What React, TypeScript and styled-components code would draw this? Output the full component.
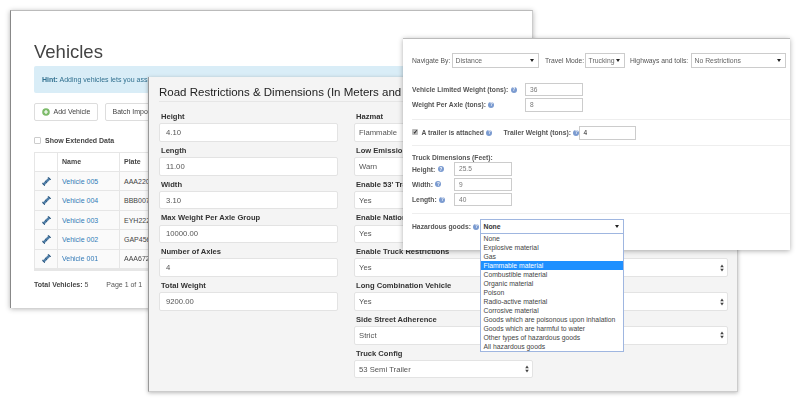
import React from "react";
import styled, { createGlobalStyle } from "styled-components";

const Global = createGlobalStyle`
  html, body { margin: 0; padding: 0; background: #fff; }
  body { font-family: "Liberation Sans", Arial, sans-serif; width: 800px; height: 406px; overflow: hidden; }
  #root { width: 800px; height: 406px; }
`;

const Canvas = styled.div`
  position: relative;
  width: 800px;
  height: 406px;
  overflow: hidden;
  filter: blur(0.4px);
`;

const VehiclesWindow = styled.section`
  position: absolute;
  left: 10px;
  top: 10px;
  width: 523px;
  height: 298px;
  box-sizing: border-box;
  padding: 30px 23px 0;
  background: #fff;
  border-top: 1px solid #bbb;
  border-left: 1px solid #888;
  border-right: 1px solid #ccc;
  box-shadow: 0 1px 5px rgba(0, 0, 0, 0.3);
  color: #333;
`;
const PageTitle = styled.h1`
  margin: 0 0 4px;
  font-size: 18.5px;
  line-height: 21px;
  font-weight: 500;
  color: #444;
`;
const Hint = styled.div`
  height: 27px;
  box-sizing: border-box;
  padding: 0 8px;
  background: #d9edf7;
  border-radius: 2px;
  color: #31708f;
  font-size: 7px;
  line-height: 27px;
  white-space: nowrap;
  overflow: hidden;
  b { font-weight: 700; }
`;
const Toolbar = styled.div`
  display: flex;
  gap: 7px;
  margin-top: 10px;
`;
const ToolButton = styled.div`
  display: flex;
  align-items: center;
  gap: 4px;
  height: 17.5px;
  box-sizing: border-box;
  padding: 0 6.5px;
  border: 1px solid #ddd;
  border-radius: 2px;
  font-size: 7px;
  color: #444;
  background: #fff;
`;
const CheckRow = styled.label`
  display: flex;
  align-items: center;
  gap: 4px;
  margin-top: 15px;
  font-size: 7px;
  font-weight: 700;
  color: #444;
  height: 9px;
`;
const EmptyBox = styled.span`
  width: 5px;
  height: 5px;
  border: 1px solid #ccc;
  border-radius: 1px;
  background: #fff;
`;
const Table = styled.div`
  display: grid;
  grid-template-columns: 23px 62px 120px 1fr;
  margin-top: 7px;
  border: 1px solid #e6e6e6;
  border-bottom-width: 2px;
  font-size: 7px;
  width: 440px;
`;
const Cell = styled.div<{ $head?: boolean; $center?: boolean }>`
  height: 19.45px;
  box-sizing: border-box;
  display: flex;
  align-items: center;
  justify-content: ${(p) => (p.$center ? "center" : "flex-start")};
  padding: ${(p) => (p.$center ? "0" : "0 4px")};
  border-right: 1px solid #e6e6e6;
  border-bottom: 1px solid #e6e6e6;
  background: ${(p) => (p.$head ? "#fff" : "#fafafa")};
  font-weight: ${(p) => (p.$head ? 700 : 400)};
  color: #444;
`;
const VehicleLink = styled.a`
  color: #337ab7;
`;
const Footer = styled.div`
  display: flex;
  gap: 18px;
  margin-top: 10px;
  font-size: 7px;
  color: #555;
  b { color: #444; }
`;

const RoadWindow = styled.section`
  position: absolute;
  left: 148px;
  top: 77px;
  width: 590px;
  height: 315px;
  box-sizing: border-box;
  padding: 8px 10px 0 10px;
  background: #f4f4f4;
  border-left: 1px solid #999;
  border-bottom: 1px solid #ccc;
  border-right: 1px solid #ccc;
  box-shadow: 0 1px 4px rgba(0, 0, 0, 0.28);
`;
const RoadTitle = styled.h2`
  margin: 0 0 6px;
  padding-bottom: 1px;
  border-bottom: 1px solid #e6e6e6;
  font-size: 11.5px;
  line-height: 15px;
  font-weight: 400;
  color: #222;
  white-space: nowrap;
  overflow: hidden;
`;
const RoadColumns = styled.div`
  display: grid;
  grid-template-columns: 179px 374px;
  gap: 16px;
  align-items: start;
  margin-top: 2px;
`;
const FieldColumn = styled.div`
  display: flex;
  flex-direction: column;
  gap: 0;
`;
const RoadLabel = styled.div`
  margin: 0 0 1px 2px;
  height: 14.3px;
  line-height: 17px;
  font-size: 7.6px;
  font-weight: 700;
  color: #333;
  white-space: nowrap;
`;
const RoadControl = styled.div<{ $narrow?: boolean; $indent?: boolean }>`
  display: flex;
  align-items: center;
  justify-content: space-between;
  height: 18.5px;
  box-sizing: border-box;
  width: ${(p) => (p.$narrow ? "179px" : "100%")};
  padding: 0 3px 0 ${(p) => (p.$indent ? "6px" : "4px")};
  background: #fff;
  border: 1px solid #e3e3e3;
  border-radius: 2px;
  font-size: 7.7px;
  color: #555;
`;
const Spinner = () => (
  <svg width="4" height="8" viewBox="0 0 4 8" aria-hidden="true">
    <path d="M2 0.5 L3.8 3.2 H0.2 Z M2 7.5 L0.2 4.8 H3.8 Z" fill="#444" />
  </svg>
);

const NavWindow = styled.section`
  position: absolute;
  left: 403px;
  top: 38px;
  width: 387px;
  height: 212px;
  box-sizing: border-box;
  padding: 14px 0 0 9px;
  background: #fff;
  border-top: 1px solid #bbb;
  box-shadow: 0 1px 5px rgba(0, 0, 0, 0.32);
  font-size: 6.75px;
  color: #444;
`;
const NavRow = styled.div`
  display: flex;
  align-items: center;
  height: 15px;
  color: #555;
  white-space: nowrap;
`;
const TightLabel = styled.span<{ $w?: number; $gap?: number }>`
  width: ${(p) => (p.$w ? `${p.$w}px` : "auto")};
  margin-left: ${(p) => p.$gap ?? 0}px;
  flex: none;
  display: flex;
  align-items: center;
`;
const NavSelect = styled.div<{ $w: number; $open?: boolean }>`
  width: ${(p) => p.$w}px;
  flex: none;
  height: ${(p) => (p.$open ? "14.5px" : "15px")};
  box-sizing: border-box;
  display: flex;
  align-items: center;
  justify-content: space-between;
  padding: 0 4px 0 2.5px;
  background: #fff;
  border: 1px solid ${(p) => (p.$open ? "#9fb6e0" : "#ccc")};
  font-size: 6.85px;
  font-weight: ${(p) => (p.$open ? 700 : 400)};
  color: ${(p) => (p.$open ? "#333" : "#666")};
`;
const Arrow = styled.span`
  width: 0;
  height: 0;
  border-left: 2px solid transparent;
  border-right: 2px solid transparent;
  border-top: 3px solid #222;
`;
const Section = styled.div<{ $top: number; $bottom: number; $line?: boolean }>`
  padding: ${(p) => p.$top}px 0 ${(p) => p.$bottom}px;
  border-bottom: ${(p) => (p.$line ? "1px solid #eee" : "none")};
`;
const BoldRow = styled.div`
  display: flex;
  align-items: center;
  height: 15.2px;
  font-weight: 700;
  white-space: nowrap;
  color: #555;
`;
const BoxInput = styled.div<{ $w: number; $dark?: boolean }>`
  width: ${(p) => p.$w}px;
  height: 13.6px;
  flex: none;
  box-sizing: border-box;
  padding: 0 4px;
  line-height: 11px;
  border: 1px solid #ccc;
  background: #fff;
  font-weight: 400;
  font-size: 6.6px;
  color: ${(p) => (p.$dark ? "#222" : "#777")};
`;
const Help = styled.span`
  display: inline-flex;
  align-items: center;
  justify-content: center;
  flex: none;
  width: 6px;
  height: 6px;
  margin-left: 2.5px;
  border-radius: 50%;
  background: #7b9bd0;
  color: #fff;
  font-size: 4.5px;
  font-weight: 700;
`;
const DimTitle = styled.div`
  height: 9px;
  line-height: 9px;
  font-size: 6.75px;
  font-weight: 700;
  color: #555;
`;
const Tick = styled.span`
  width: 6px;
  height: 6px;
  margin: -2px 3.5px 0 0;
  flex: none;
  background: #bbb;
  border-radius: 1px;
  color: #222;
  font-size: 6px;
  line-height: 6px;
  text-align: center;
  font-weight: 700;
`;
const HazardWrap = styled.div`
  position: relative;
  flex: none;
`;
const Menu = styled.ul`
  position: absolute;
  left: 0;
  top: 14px;
  width: 144px;
  box-sizing: border-box;
  margin: 0;
  padding: 0;
  list-style: none;
  background: #fff;
  border: 1px solid #9fb6e0;
  font-size: 6.8px;
  font-weight: 400;
  z-index: 2;
`;
const MenuItem = styled.li<{ $active?: boolean }>`
  height: 8.95px;
  line-height: 9px;
  padding-left: 2.5px;
  white-space: nowrap;
  background: ${(p) => (p.$active ? "#1e90ff" : "#fff")};
  color: ${(p) => (p.$active ? "#fff" : "#444")};
`;

const Tool = () => (
  <svg width="9" height="9" viewBox="0 0 9 9" aria-hidden="true">
    <path d="M1.2 7.8 L7.8 1.2" stroke="#4f7ea8" strokeWidth="2.6" />
    <path d="M0.2 6 L3 8.8 M3.2 4 L5 5.8 M6 0.2 L8.8 3" stroke="#2f5578" strokeWidth="1" />
  </svg>
);
const AddIcon = () => (
  <svg width="8" height="8" viewBox="0 0 8 8" aria-hidden="true">
    <circle cx="4" cy="4" r="3.8" fill="#7dbb6a" />
    <path d="M4 2 V6 M2 4 H6" stroke="#fff" strokeWidth="1.2" />
  </svg>
);

const vehicles = [
  ["Vehicle 005", "AAA2201"],
  ["Vehicle 004", "BBB0072"],
  ["Vehicle 003", "EYH2223"],
  ["Vehicle 002", "GAP4561"],
  ["Vehicle 001", "AAA6725"],
];
const leftFields = [
  ["Height", "4.10"],
  ["Length", "11.00"],
  ["Width", "3.10"],
  ["Max Weight Per Axle Group", "10000.00"],
  ["Number of Axles", "4"],
  ["Total Weight", "9200.00"],
];
const rightFields = [
  ["Hazmat", "Flammable"],
  ["Low Emission Zone", "Warn"],
  ["Enable 53' Trailer", "Yes"],
  ["Enable National Network", "Yes"],
  ["Enable Truck Restrictions", "Yes"],
  ["Long Combination Vehicle", "Yes"],
  ["Side Street Adherence", "Strict"],
];
const goods = [
  "None",
  "Explosive material",
  "Gas",
  "Flammable material",
  "Combustible material",
  "Organic material",
  "Poison",
  "Radio-active material",
  "Corrosive material",
  "Goods which are poisonous upon inhalation",
  "Goods which are harmful to water",
  "Other types of hazardous goods",
  "All hazardous goods",
];

export default function App() {
  return (
    <Canvas>
      <Global />
      <VehiclesWindow>
        <PageTitle>Vehicles</PageTitle>
        <Hint>
          <b>Hint:</b> Adding vehicles lets you assign specific routes to each vehicle for tracking and reporting your fleet data
        </Hint>
        <Toolbar>
          <ToolButton>
            <AddIcon />
            Add Vehicle
          </ToolButton>
          <ToolButton>Batch Import</ToolButton>
        </Toolbar>
        <CheckRow>
          <EmptyBox />
          Show Extended Data
        </CheckRow>
        <Table>
          <Cell $head />
          <Cell $head>Name</Cell>
          <Cell $head>Plate</Cell>
          <Cell $head />
          {vehicles.map(([name, plate]) => (
            <React.Fragment key={name}>
              <Cell $center>
                <Tool />
              </Cell>
              <Cell>
                <VehicleLink>{name}</VehicleLink>
              </Cell>
              <Cell>{plate}</Cell>
              <Cell />
            </React.Fragment>
          ))}
        </Table>
        <Footer>
          <span>
            <b>Total Vehicles:</b> 5
          </span>
          <span>Page 1 of 1</span>
        </Footer>
      </VehiclesWindow>

      <RoadWindow>
        <RoadTitle>Road Restrictions &amp; Dimensions (In Meters and Tons)</RoadTitle>
        <RoadColumns>
          <FieldColumn>
            {leftFields.map(([label, value]) => (
              <div key={label}>
                <RoadLabel>{label}</RoadLabel>
                <RoadControl $indent>{value}</RoadControl>
              </div>
            ))}
          </FieldColumn>
          <FieldColumn>
            {rightFields.map(([label, value]) => (
              <div key={label}>
                <RoadLabel>{label}</RoadLabel>
                <RoadControl>
                  {value}
                  <Spinner />
                </RoadControl>
              </div>
            ))}
            <div>
              <RoadLabel>Truck Config</RoadLabel>
              <RoadControl $narrow>
                53 Semi Trailer
                <Spinner />
              </RoadControl>
            </div>
          </FieldColumn>
        </RoadColumns>
      </RoadWindow>

      <NavWindow>
        <Section $top={0} $bottom={14}>
          <NavRow>
            <TightLabel $w={40}>Navigate By:</TightLabel>
            <NavSelect $w={87}>
              Distance
              <Arrow />
            </NavSelect>
            <TightLabel $w={40} $gap={6}>Travel Mode:</TightLabel>
            <NavSelect $w={40}>
              Trucking
              <Arrow />
            </NavSelect>
            <TightLabel $w={61} $gap={5}>Highways and tolls:</TightLabel>
            <NavSelect $w={95}>
              No Restrictions
              <Arrow />
            </NavSelect>
          </NavRow>
        </Section>
        <Section $top={0} $bottom={7} $line>
          <BoldRow>
            <TightLabel $w={113}>
              Vehicle Limited Weight (tons):<Help>?</Help>
            </TightLabel>
            <BoxInput $w={58}>36</BoxInput>
          </BoldRow>
          <BoldRow>
            <TightLabel $w={113}>
              Weight Per Axle (tons):<Help>?</Help>
            </TightLabel>
            <BoxInput $w={58}>8</BoxInput>
          </BoldRow>
        </Section>
        <Section $top={5} $bottom={4} $line>
          <BoldRow>
            <Tick>✓</Tick>
            <TightLabel $w={82}>
              A trailer is attached<Help>?</Help>
            </TightLabel>
            <TightLabel $w={75}>
              Trailer Weight (tons):<Help>?</Help>
            </TightLabel>
            <BoxInput $w={57} $dark>4</BoxInput>
          </BoldRow>
        </Section>
        <Section $top={7} $bottom={6} $line>
          <DimTitle>Truck Dimensions (Feet):</DimTitle>
          {[
            ["Height:", "25.5"],
            ["Width:", "9"],
            ["Length:", "40"],
          ].map(([label, value]) => (
            <BoldRow key={label}>
              <TightLabel $w={42}>
                {label}
                <Help>?</Help>
              </TightLabel>
              <BoxInput $w={58}>{value}</BoxInput>
            </BoldRow>
          ))}
        </Section>
        <Section $top={5} $bottom={0}>
          <BoldRow>
            <TightLabel $w={68}>
              Hazardous goods:<Help>?</Help>
            </TightLabel>
            <HazardWrap>
              <NavSelect $w={144} $open>
                None
                <Arrow />
              </NavSelect>
              <Menu>
                {goods.map((g) => (
                  <MenuItem key={g} $active={g === "Flammable material"}>
                    {g}
                  </MenuItem>
                ))}
              </Menu>
            </HazardWrap>
          </BoldRow>
        </Section>
      </NavWindow>
    </Canvas>
  );
}
